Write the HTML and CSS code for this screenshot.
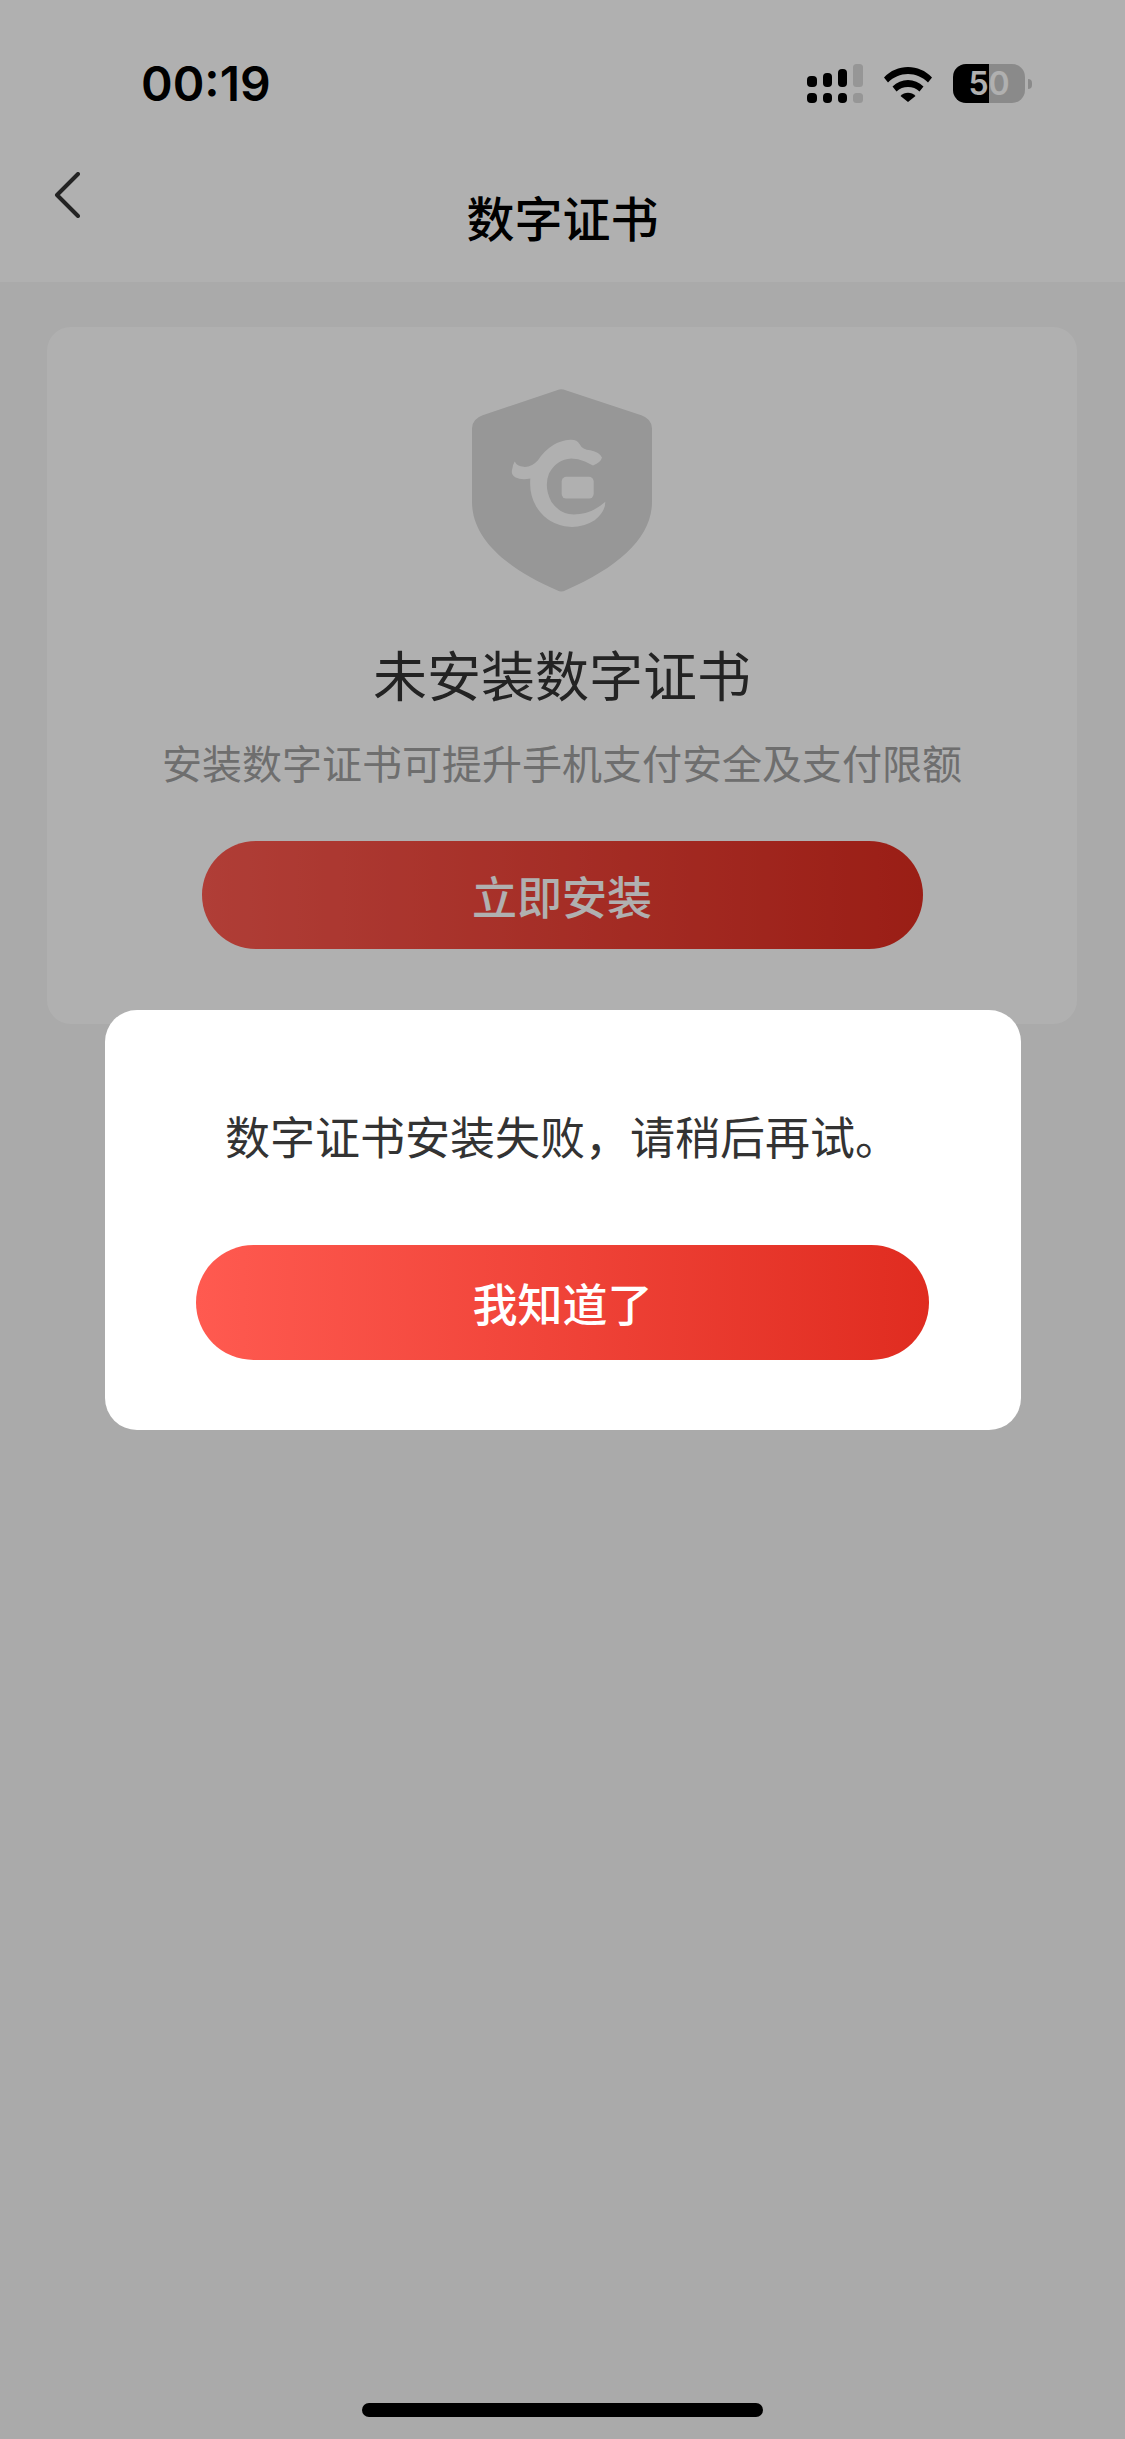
FILE: index.html
```html
<!DOCTYPE html>
<html lang="zh-CN">
<head>
    <meta charset="UTF-8">
    <meta name="viewport" content="width=device-width, initial-scale=1.0">
    <title>数字证书</title>
    <link rel="stylesheet" href="styles.css">
</head>
<body>
    <div class="page">
        <div class="top-bar">
            <div class="status-bar">
                <span class="time">00:19</span>
                <div class="status-icons">
                    <svg class="signal" viewBox="0 0 56 39" width="56" height="39">
                        <rect x="0" y="12" width="10" height="11" rx="4" fill="#000"/>
                        <rect x="16" y="9" width="9" height="14" rx="4" fill="#000"/>
                        <rect x="31" y="5" width="9" height="18" rx="4" fill="#000"/>
                        <rect x="46" y="0" width="10" height="23" rx="3.5" fill="#d9d9d9"/>
                        <rect x="0" y="29" width="10" height="10" rx="4" fill="#000"/>
                        <rect x="16" y="29" width="9" height="10" rx="4" fill="#000"/>
                        <rect x="31" y="29" width="9" height="10" rx="4" fill="#000"/>
                        <rect x="46" y="29" width="10" height="10" rx="3.5" fill="#d9d9d9"/>
                    </svg>
                    <svg class="wifi" viewBox="0 0 48 36" width="48" height="36">
                        <path d="M0 11.5C6.500 4.500 15 1 24 1s17.500 3.500 24 10.500l-4 5C38.500 11 31.500 8 24 8S9.500 11 4 16.500z" fill="#000"/>
                        <path d="M8.500 20.500C12.800 16.300 18.200 14 24 14s11.200 2.300 15.500 6.500l-4 5C32.300 22.300 28.300 21 24 21s-8.300 1.300-11.500 4.500z" fill="#000"/>
                        <path d="M16.500 30c2-2 4.700-3.200 7.500-3.200s5.500 1.200 7.500 3.200L24 36z" fill="#000"/>
                    </svg>
                    <div class="battery-wrap">
                        <div class="battery">50</div>
                        <div class="battery-nub"></div>
                    </div>
                </div>
            </div>
            <div class="nav-bar">
                <svg class="back-icon" viewBox="0 0 26 46" width="26" height="46">
                    <path d="M24 2L3 23l21 21" fill="none" stroke="#333" stroke-width="4" stroke-linecap="round" stroke-linejoin="round"/>
                </svg>
                <h1 class="nav-title">数字证书</h1>
            </div>
        </div>

        <div class="cert-card">
            <svg class="shield" viewBox="97 57 540 608" width="180" height="203">
                <path d="M352 60Q365 54 378 60L605 135Q637 146 637 175V395C637 500 540 590 378 660Q365 668 352 660C190 590 97 500 97 395V175Q97 146 129 135Z" fill="#dbdbdb"/>
                <path d="M225 274Q232 288 252 290Q275 292 295 270Q335 212 392 209Q412 208 420 222Q428 238 452 240Q480 246 487 262Q484 276 460 286Q448 280 436 274Q415 265 395 265Q350 268 328 310Q312 350 335 395Q360 432 402 433Q455 433 497 395Q497 425 465 450Q430 472 390 470Q325 465 290 410Q268 372 272 325Q245 330 228 322Q212 314 218 296Q220 282 225 274Z" fill="#fff"/>
                <rect x="366" y="320" width="96" height="65" rx="14" fill="#fff"/>
            </svg>
            <h2 class="cert-title">未安装数字证书</h2>
            <p class="cert-desc">安装数字证书可提升手机支付安全及支付限额</p>
            <button class="red-btn install-btn">立即安装</button>
        </div>

        <div class="home-indicator"></div>
    </div>

    <div class="overlay">
        <div class="dialog">
            <p class="dialog-text">数字证书安装失败，请稍后再试。</p>
            <button class="red-btn dialog-btn">我知道了</button>
        </div>
    </div>
</body>
</html>
```

FILE: styles.css
```css
html, body {
    height: 100%;
    margin: 0;
    padding: 0;
}
body {
    font-family: "Noto Sans CJK SC", "Noto Sans", sans-serif;
    background-color: #f7f7f7;
    overflow: hidden;
}
.page {
    display: flex;
    flex-direction: column;
    height: 100vh;
    box-sizing: border-box;
}
.top-bar {
    background: #fff;
    height: 282px;
}
.status-bar {
    display: flex;
    justify-content: space-between;
    align-items: flex-start;
    height: 150px;
    box-sizing: border-box;
    padding: 57px 93px 0 141px;
}
.time {
    font-family: Inter, "Liberation Sans", sans-serif;
    font-size: 48px;
    font-weight: 600;
    line-height: 54px;
    color: #000;
}
.status-icons {
    display: flex;
    align-items: flex-start;
    gap: 21px;
    padding-top: 7px;
}
.wifi {
    margin-top: 2px;
}
.battery-wrap {
    display: flex;
    align-items: center;
    gap: 3px;
}
.battery {
    width: 72px;
    height: 39px;
    border-radius: 13px;
    background: linear-gradient(90deg, #000 50%, #c9c9c9 50%);
    color: #fff;
    font-family: Inter, "Liberation Sans", sans-serif;
    font-size: 32px;
    font-weight: 600;
    line-height: 39px;
    text-align: center;
}
.battery-nub {
    width: 4px;
    height: 10px;
    border-radius: 0 4px 4px 0;
    background: #c9c9c9;
}
.nav-bar {
    display: flex;
    align-items: center;
    justify-content: center;
    height: 132px;
    position: relative;
}
.back-icon {
    position: absolute;
    left: 54px;
    top: 22px;
}
.nav-title {
    margin: 0;
    font-size: 48px;
    font-weight: 500;
    line-height: 60px;
    color: #000;
}
.cert-card {
    display: flex;
    flex-direction: column;
    align-items: center;
    height: 697px;
    box-sizing: border-box;
    margin: 45px 48px 0 47px;
    padding-top: 62px;
    background: #fff;
    border-radius: 24px;
}
.cert-title {
    margin: 46px 0 0;
    font-size: 54px;
    font-weight: 400;
    line-height: 72px;
    color: #333;
}
.cert-desc {
    margin: 26px 0 0;
    font-size: 40px;
    line-height: 52px;
    color: #a0a0a0;
}
.red-btn {
    display: block;
    border: none;
    padding: 0;
    color: #fff;
    font-family: inherit;
    font-size: 45px;
    font-weight: 500;
    background: linear-gradient(90deg, #ff5a50, #e02c20);
}
.install-btn {
    width: 721px;
    height: 108px;
    margin-top: 53px;
    border-radius: 54px;
}
.home-indicator {
    width: 401px;
    height: 14px;
    margin: auto auto 22px;
    border-radius: 7px;
    background: #000;
}
.overlay {
    position: fixed;
    top: 0;
    left: 0;
    right: 0;
    bottom: 0;
    display: flex;
    align-items: center;
    justify-content: center;
    background: rgba(0, 0, 0, 0.31);
}
.dialog {
    width: 916px;
    height: 420px;
    box-sizing: border-box;
    padding-top: 94px;
    background: #fff;
    border-radius: 32px;
}
.dialog-text {
    margin: 0;
    font-size: 45px;
    line-height: 64px;
    text-align: center;
    color: #333;
}
.dialog-btn {
    width: 733px;
    height: 115px;
    margin: 77px auto 0;
    border-radius: 58px;
}
```
